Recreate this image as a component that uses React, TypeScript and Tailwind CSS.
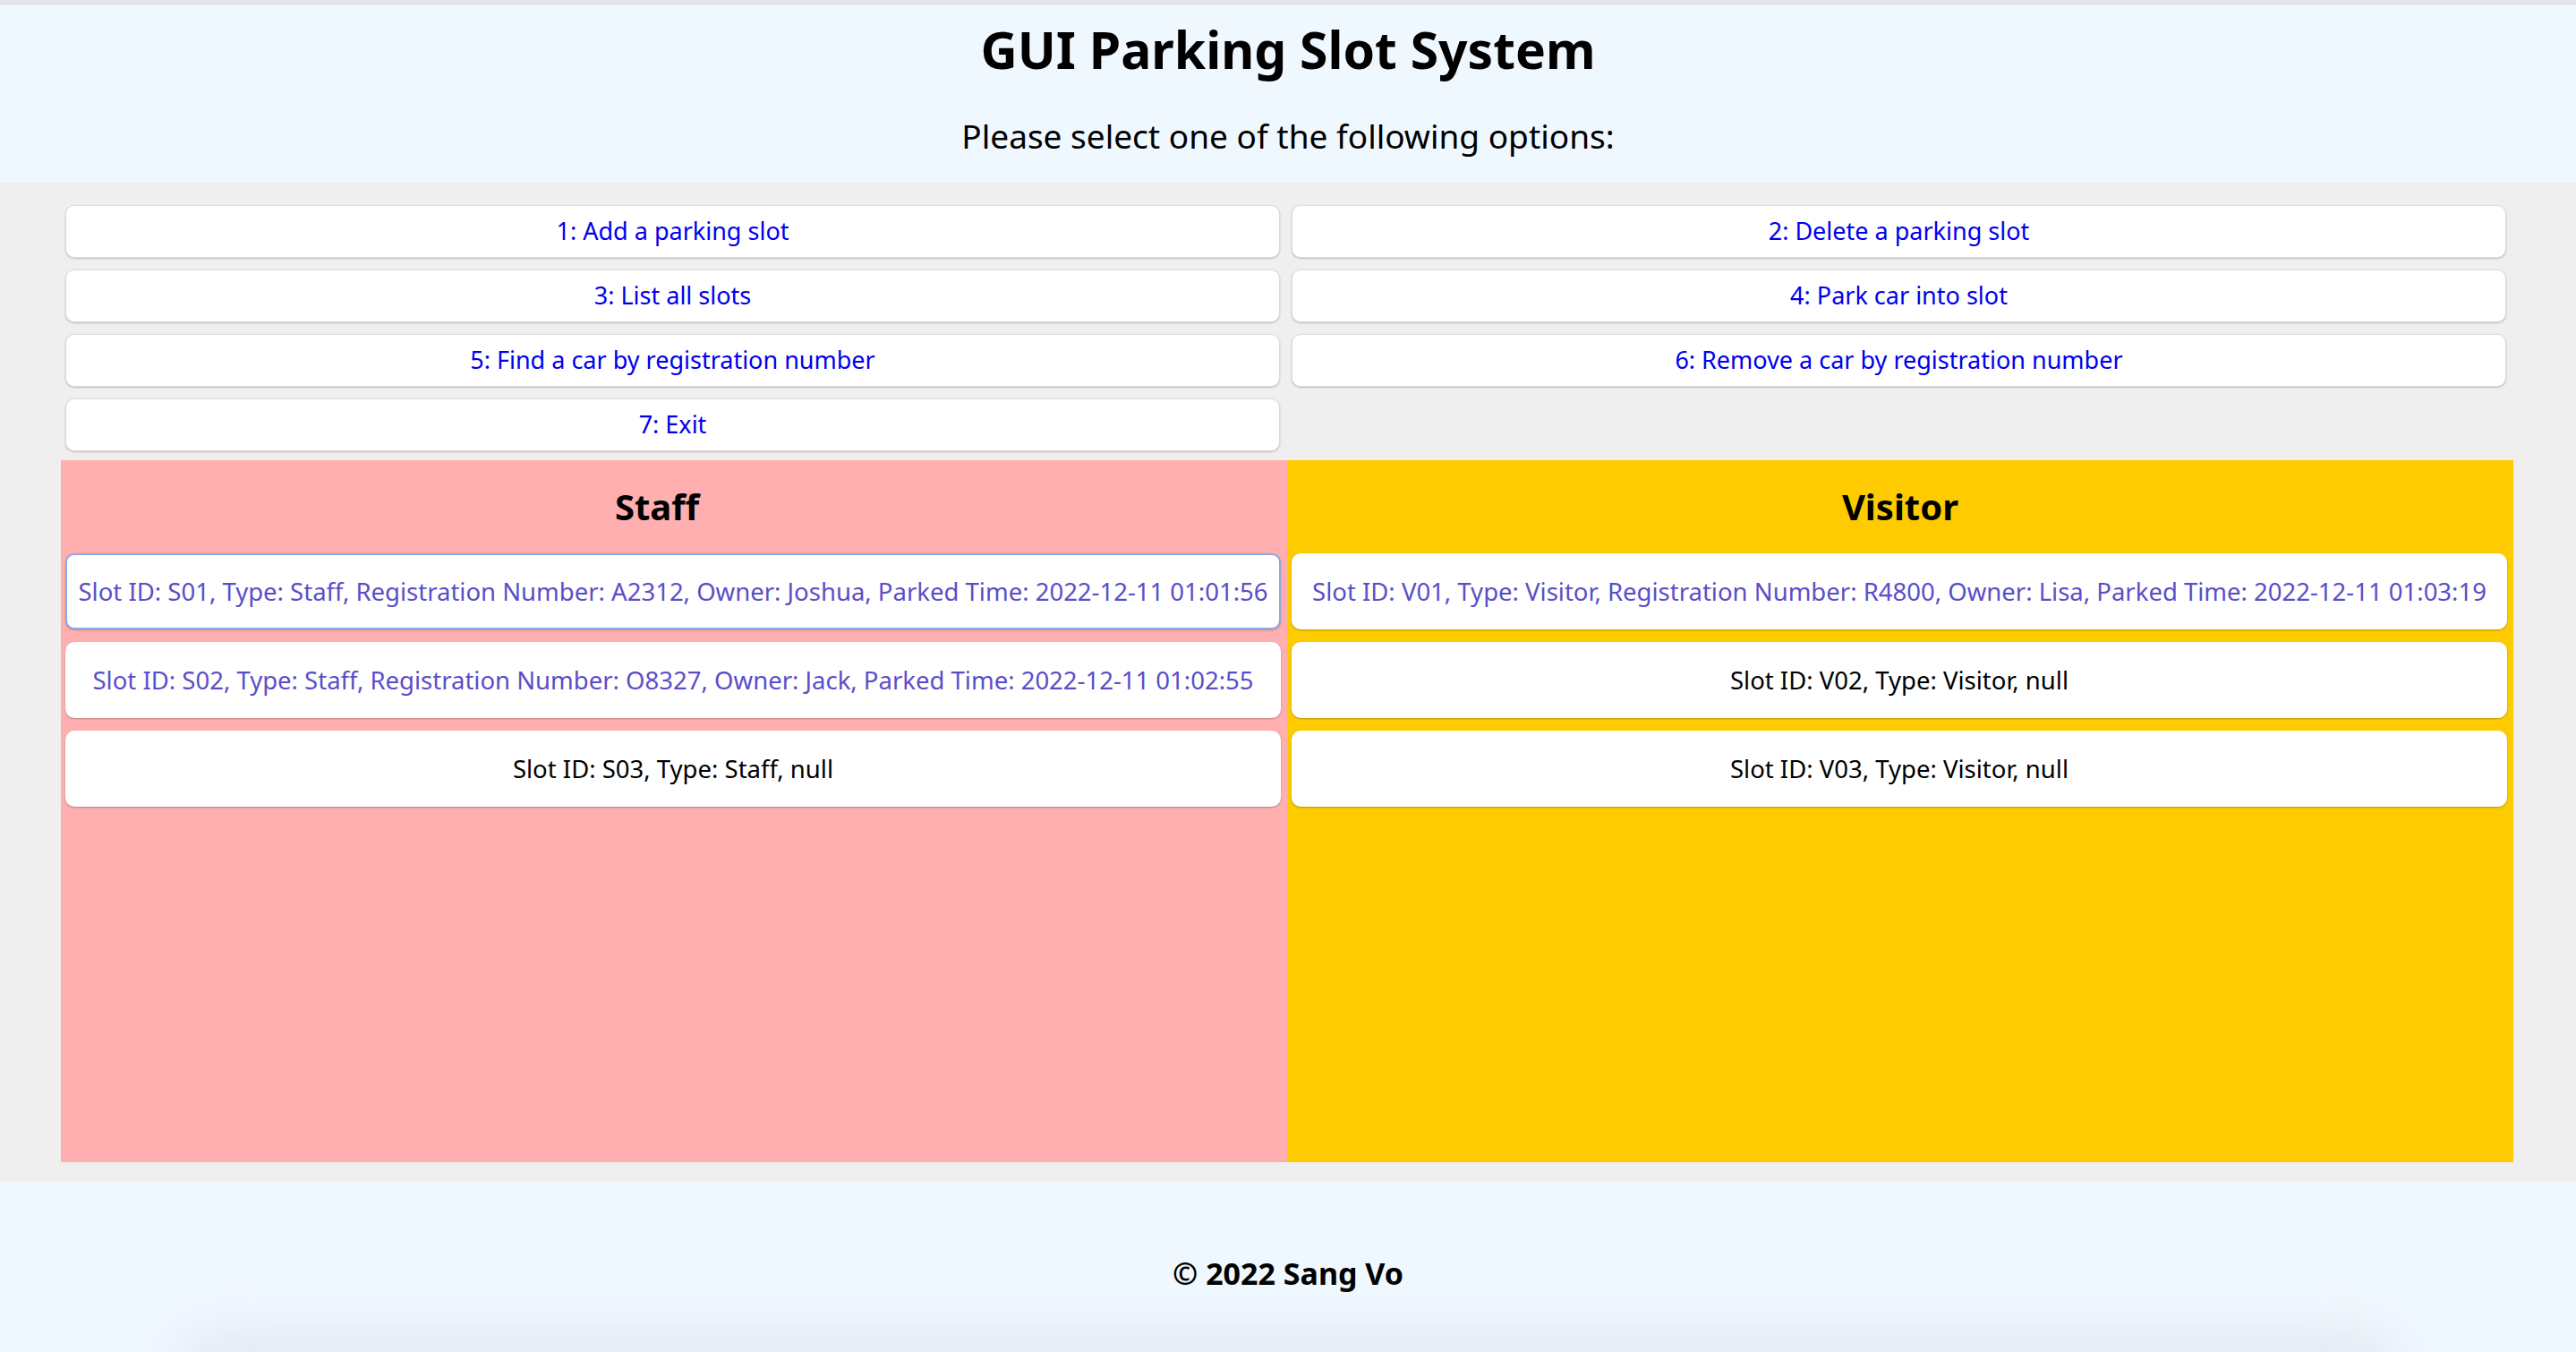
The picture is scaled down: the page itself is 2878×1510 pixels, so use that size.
const options = [
  '1: Add a parking slot',
  '2: Delete a parking slot',
  '3: List all slots',
  '4: Park car into slot',
  '5: Find a car by registration number',
  '6: Remove a car by registration number',
  '7: Exit',
];

type Slot = { text: string; parked: boolean; focused?: boolean };

const staffSlots: Slot[] = [
  {
    text: 'Slot ID: S01, Type: Staff, Registration Number: A2312, Owner: Joshua, Parked Time: 2022-12-11 01:01:56',
    parked: true,
    focused: true,
  },
  {
    text: 'Slot ID: S02, Type: Staff, Registration Number: O8327, Owner: Jack, Parked Time: 2022-12-11 01:02:55',
    parked: true,
  },
  { text: 'Slot ID: S03, Type: Staff, null', parked: false },
];

const visitorSlots: Slot[] = [
  {
    text: 'Slot ID: V01, Type: Visitor, Registration Number: R4800, Owner: Lisa, Parked Time: 2022-12-11 01:03:19',
    parked: true,
  },
  { text: 'Slot ID: V02, Type: Visitor, null', parked: false },
  { text: 'Slot ID: V03, Type: Visitor, null', parked: false },
];

const SlotCard = ({ slot }: { slot: Slot }) => (
  <div
    className={
      slot.focused
        ? 'h-[85px] flex items-center justify-center rounded-[10px] bg-white border-2 border-[#8eaae6] px-1 shadow-[0_1px_2px_rgba(0,0,0,0.25)]'
        : 'h-[85px] flex items-center justify-center rounded-[10px] bg-white border border-white/60 px-1 shadow-[0_1px_2px_rgba(0,0,0,0.28)]'
    }
  >
    <span
      className={
        slot.parked
          ? 'text-[27.5px] whitespace-nowrap text-[#5a4ec8]'
          : 'text-[27.5px] whitespace-nowrap text-black'
      }
    >
      {slot.text}
    </span>
  </div>
);

const Panel = ({
  title,
  slots,
  bg,
  shift,
}: {
  title: string;
  slots: Slot[];
  bg: string;
  shift?: boolean;
}) => (
  <div className={`${bg} flex flex-col`}>
    <h2
      className={
        shift
          ? 'h-[104px] pr-[38px] flex items-center justify-center text-[40px] font-bold text-black'
          : 'h-[104px] flex items-center justify-center text-[40px] font-bold text-black'
      }
    >
      {title}
    </h2>
    <div className="flex flex-col gap-[14px] ml-[5px] mr-[7px]">
      {slots.map((s) => (
        <SlotCard key={s.text} slot={s} />
      ))}
    </div>
  </div>
);

export default function App() {
  return (
    <div
      className="w-full h-[1510px] flex flex-col bg-[#efefef] overflow-hidden"
      style={{ fontFamily: '"Noto Sans", "DejaVu Sans", sans-serif' }}
    >
      <div className="h-[5px] bg-[#e5e7ed] border-b border-[#d1d4db]" />
      <header className="h-[199px] bg-[#f0f8ff] flex flex-col items-center">
        <h1 className="mt-[19px] text-[57px] leading-[62px] font-bold text-black">
          GUI Parking Slot System
        </h1>
        <p className="mt-[44px] text-[37px] leading-[44px] text-black">
          Please select one of the following options:
        </p>
      </header>

      <main className="flex-1 flex flex-col pl-[68px] pr-[70px] pt-[25px]">
        <div className="grid grid-cols-2 gap-x-[13px] gap-y-[13px] ml-[5px] mr-[8px]">
          {options.map((o) => (
            <button
              key={o}
              className="h-[59px] rounded-[10px] bg-white border border-[#dcdcdc] shadow-[0_1px_2px_rgba(0,0,0,0.22)] text-[27px] text-[#0000ee]"
            >
              {o}
            </button>
          ))}
        </div>

        <div className="mt-[10px] h-[784px] grid grid-cols-2">
          <Panel title="Staff" slots={staffSlots} bg="bg-[#ffafaf]" shift />
          <Panel title="Visitor" slots={visitorSlots} bg="bg-[#fecb00]" />
        </div>
      </main>

      <footer className="h-[190px] bg-[#f0f8ff] flex flex-col items-center">
        <p className="mt-[80px] text-[34px] leading-[44px] font-bold text-black">© 2022 Sang Vo</p>
        <div className="mt-auto mx-auto w-[2480px] h-[50px] rounded-t-[60px] bg-gradient-to-b from-[#eef4fb] to-[#d6dde6] blur-xl translate-y-[20px]" />
      </footer>
    </div>
  );
}
